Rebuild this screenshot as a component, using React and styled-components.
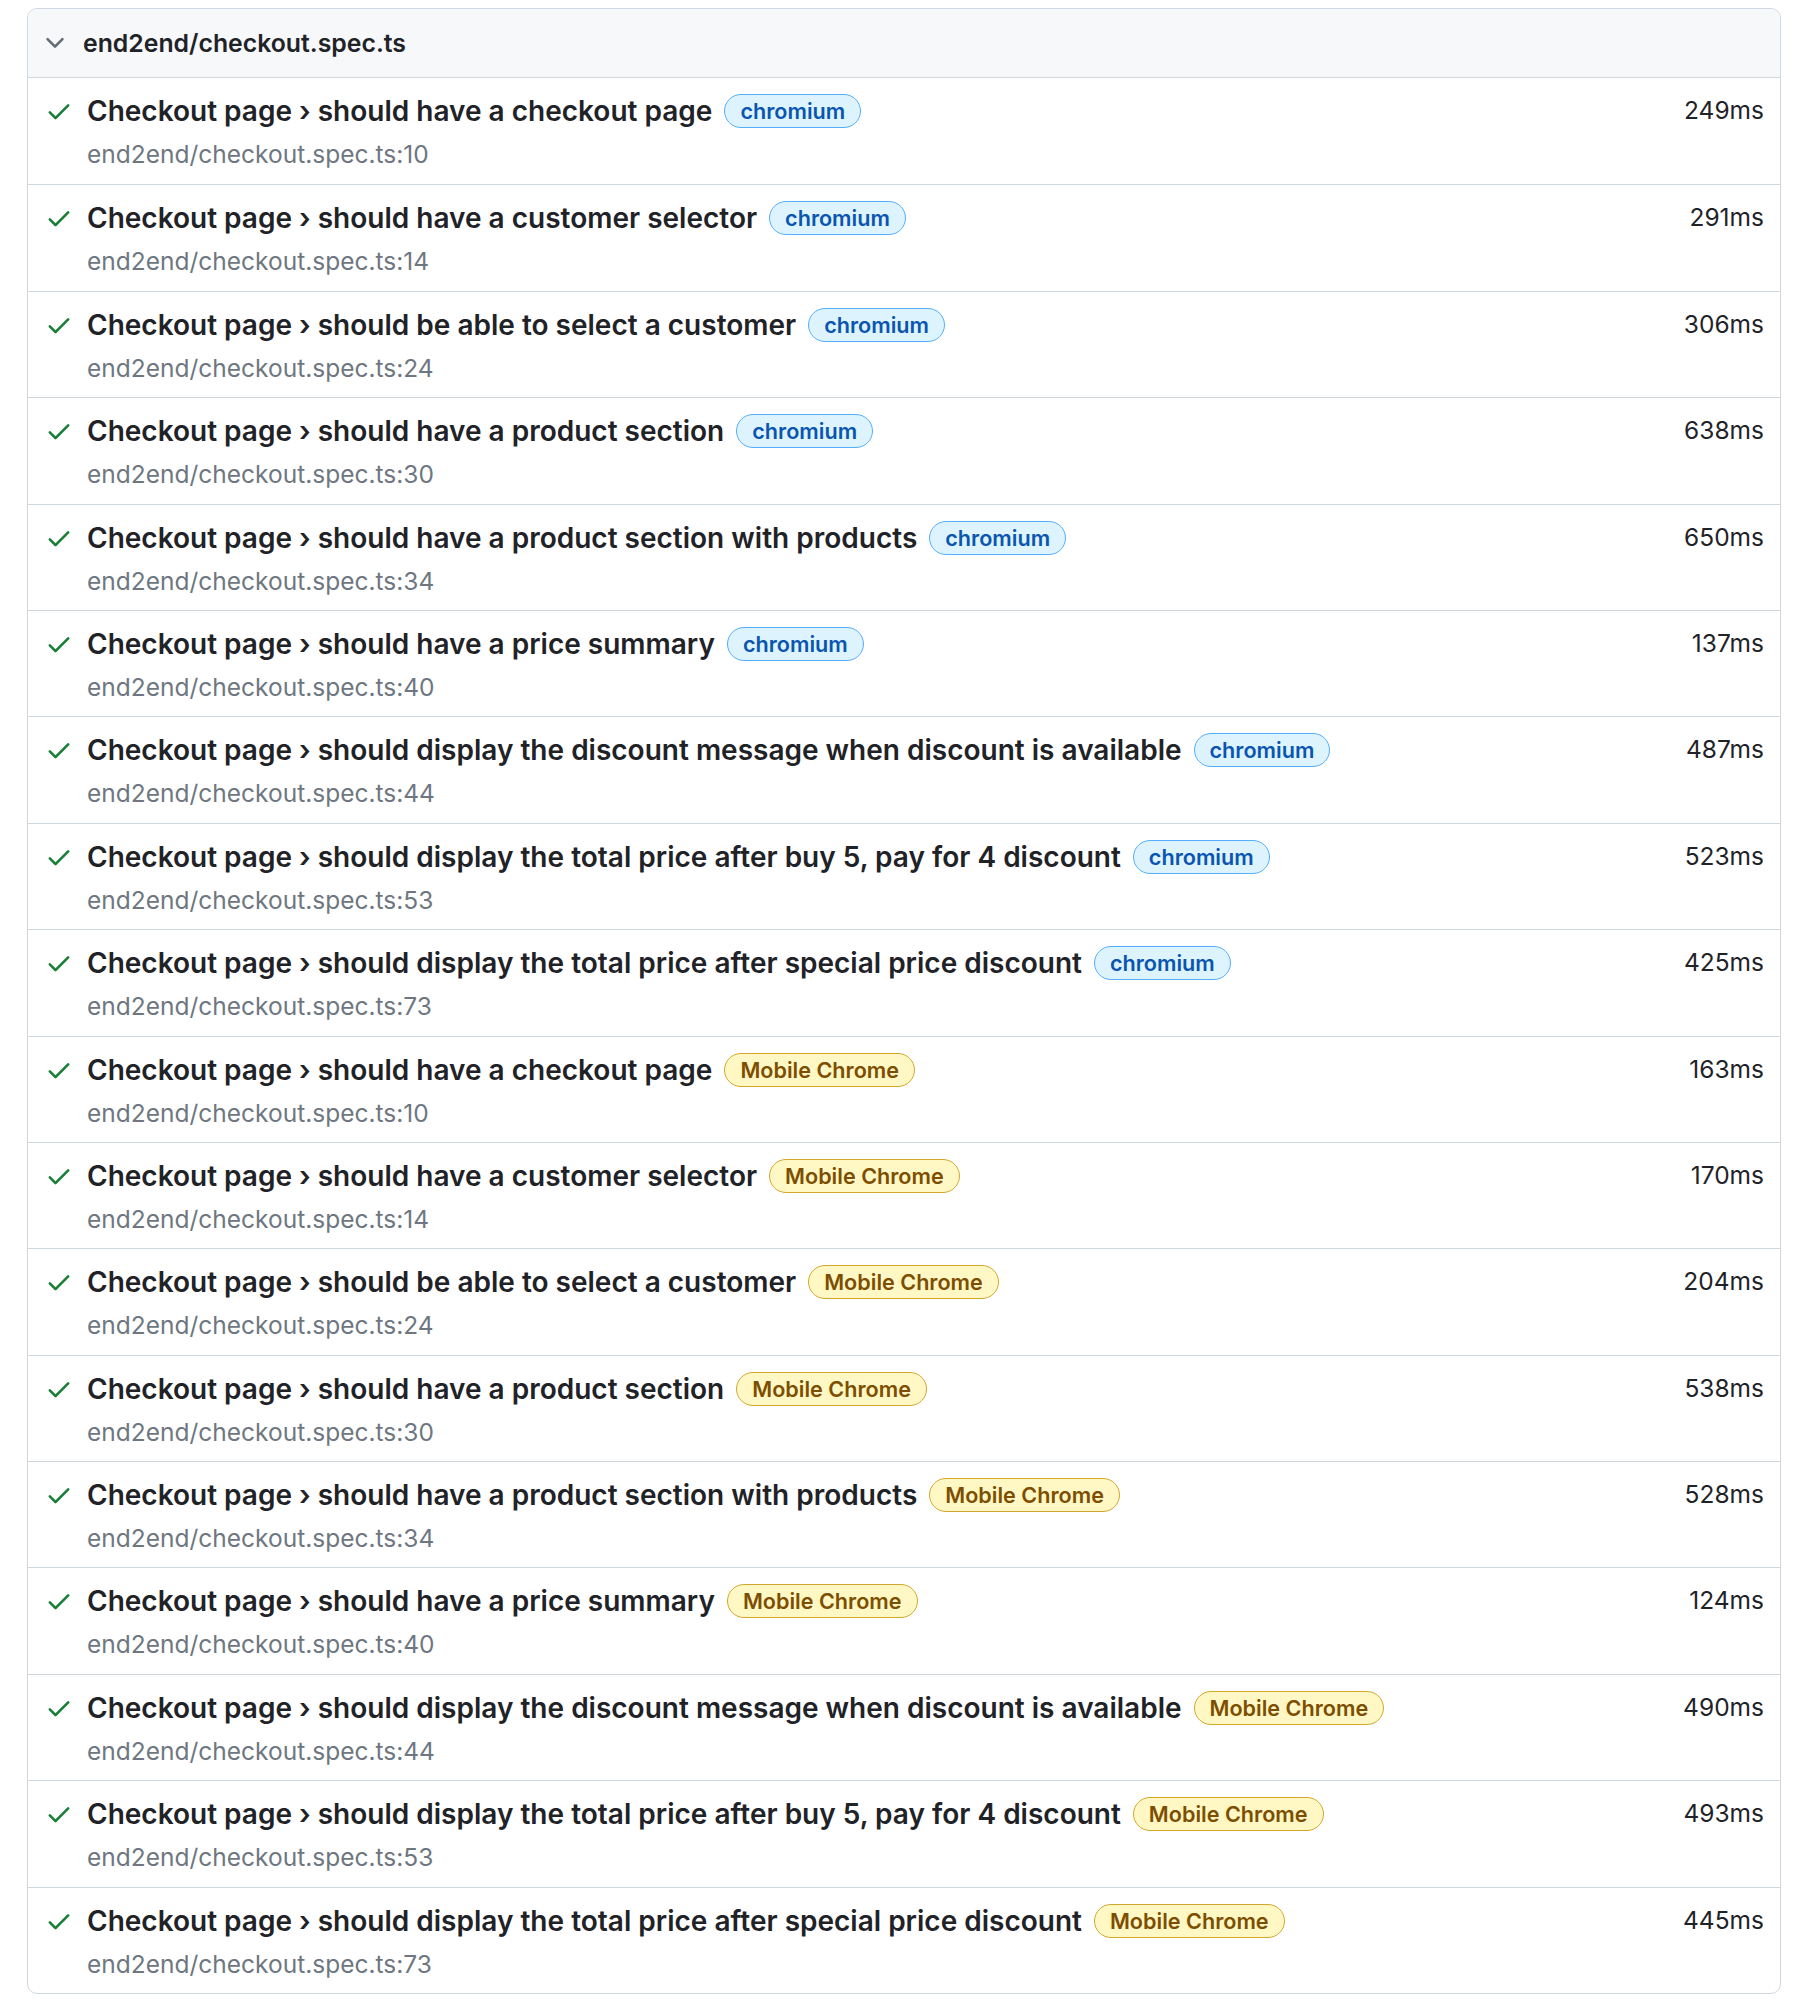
import React from "react";
import styled, { createGlobalStyle } from "styled-components";

const GlobalStyle = createGlobalStyle`
  html, body { margin: 0; padding: 0; background: #ffffff; }
  body { font-family: Inter, "Noto Sans", "Liberation Sans", sans-serif; color: #1f2328; }
`;

const Page = styled.div`
  padding: 8px 13px 22px 27px;
`;

const Card = styled.section`
  border: 1px solid #d0d7de;
  border-radius: 10px;
  overflow: hidden;
  background: #ffffff;
`;

const Header = styled.div`
  display: flex;
  align-items: center;
  gap: 14px;
  height: 68px;
  padding: 0 0 0 13px;
  background: #f6f8fa;
  border-bottom: 1px solid #d0d7de;
  font-size: 24.8px;
  font-weight: 600;
  color: #1f2328;
`;

const IconBox = styled.span`
  display: inline-flex;
  width: 28px;
  height: 28px;
  flex: none;
  color: ${(p) => p.$color};
  svg { width: 28px; height: 28px; fill: currentColor; }
`;

const Row = styled.div`
  display: flex;
  align-items: flex-start;
  padding: 12px 16px 12px 17px;
  height: 106.4px;
  box-sizing: border-box;
  & + & { border-top: 1px solid #d0d7de; }
`;

const CheckSlot = styled.div`
  padding-top: 7px;
  margin-right: 14px;
`;

const Body = styled.div`
  flex: 1;
  min-width: 0;
  display: flex;
  flex-direction: column;
`;

const TitleLine = styled.div`
  display: flex;
  align-items: center;
  gap: 12px;
  height: 42px;
`;

const Title = styled.span`
  font-size: 28px;
  font-weight: 600;
  line-height: 42px;
  color: #1f2328;
  white-space: nowrap;
`;

const Badge = styled.span`
  display: inline-flex;
  align-items: center;
  height: 34px;
  box-sizing: border-box;
  padding: 0 15px;
  border-radius: 999px;
  border: 1px solid ${(p) => (p.$kind === "mobile" ? "#d4a72c" : "#54aeff")};
  background: ${(p) => (p.$kind === "mobile" ? "#fff8c5" : "#ddf4ff")};
  color: ${(p) => (p.$kind === "mobile" ? "#7d4e00" : "#0a55b0")};
  font-size: 21.6px;
  font-weight: 600;
  white-space: nowrap;
`;

const Location = styled.div`
  margin-top: 5px;
  font-size: 24.5px;
  line-height: 34px;
  color: #6e7781;
`;

const Duration = styled.div`
  flex: none;
  font-size: 24.5px;
  line-height: 40px;
  color: #1f2328;
`;

const Chevron = () => (
  <svg viewBox="0 0 16 16" aria-hidden="true">
    <path d="M12.78 5.22a.749.749 0 0 1 0 1.060l-4.25 4.25a.749.749 0 0 1-1.06 0L3.22 6.28a.749.749 0 1 1 1.06-1.06L8 8.939l3.72-3.719a.749.749 0 0 1 1.06 0Z" />
  </svg>
);

const Check = () => (
  <svg viewBox="0 0 16 16" aria-hidden="true">
    <path d="M13.78 4.22a.75.75 0 0 1 0 1.06l-7.25 7.25a.75.75 0 0 1-1.06 0L2.22 9.28a.751.751 0 0 1 .018-1.042.751.751 0 0 1 1.042-.018L6 10.94l6.72-6.72a.75.75 0 0 1 1.06 0Z" />
  </svg>
);

const cases = [
  ["should have a checkout page", 10],
  ["should have a customer selector", 14],
  ["should be able to select a customer", 24],
  ["should have a product section", 30],
  ["should have a product section with products", 34],
  ["should have a price summary", 40],
  ["should display the discount message when discount is available", 44],
  ["should display the total price after buy 5, pay for 4 discount", 53],
  ["should display the total price after special price discount", 73],
];

const chromiumTimes = [249, 291, 306, 638, 650, 137, 487, 523, 425];
const mobileTimes = [163, 170, 204, 538, 528, 124, 490, 493, 445];

const tests = [
  ...cases.map(([name, line], i) => ({ name, line, project: "chromium", kind: "chromium", ms: chromiumTimes[i] })),
  ...cases.map(([name, line], i) => ({ name, line, project: "Mobile Chrome", kind: "mobile", ms: mobileTimes[i] })),
];

export default function App() {
  return (
    <>
      <GlobalStyle />
      <Page>
        <Card>
          <Header>
            <IconBox $color="#656d76"><Chevron /></IconBox>
            <span>end2end/checkout.spec.ts</span>
          </Header>
          {tests.map((t, i) => (
            <Row key={i}>
              <CheckSlot>
                <IconBox $color="#1a7f37"><Check /></IconBox>
              </CheckSlot>
              <Body>
                <TitleLine>
                  <Title>Checkout page › {t.name}</Title>
                  <Badge $kind={t.kind}>{t.project}</Badge>
                </TitleLine>
                <Location>end2end/checkout.spec.ts:{t.line}</Location>
              </Body>
              <Duration>{t.ms}ms</Duration>
            </Row>
          ))}
        </Card>
      </Page>
    </>
  );
}
